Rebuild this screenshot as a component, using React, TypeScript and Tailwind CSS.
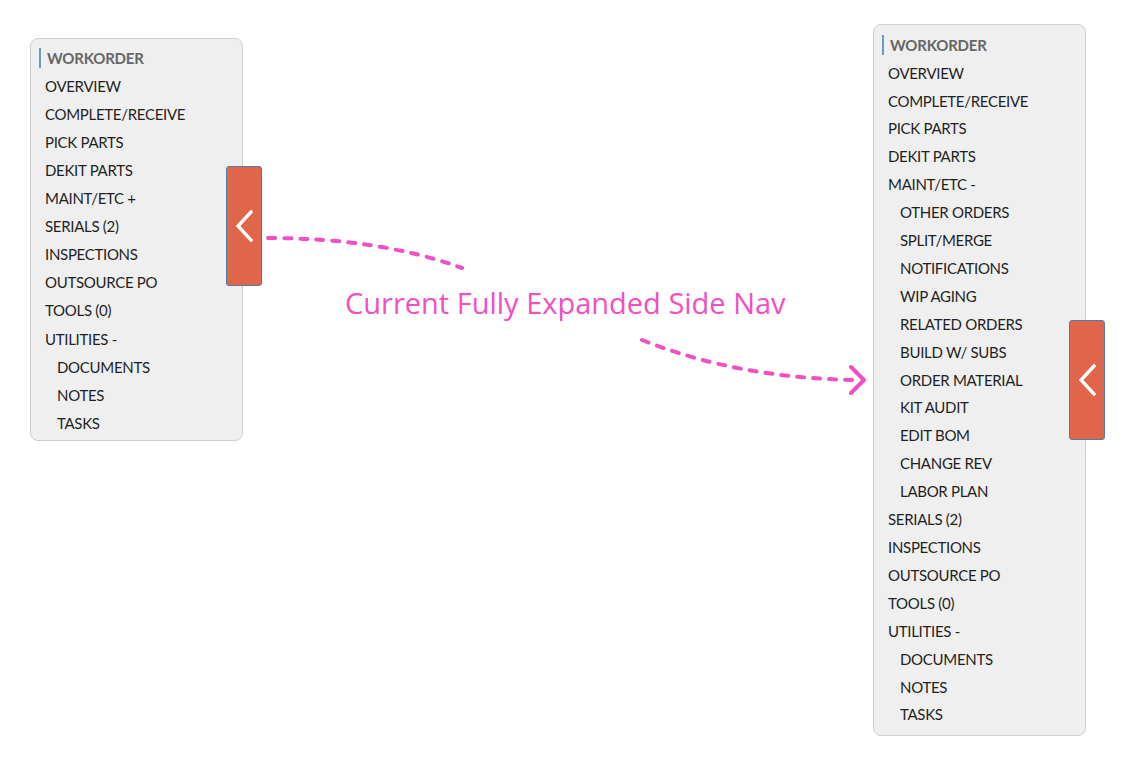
import React from 'react';

type NavItem = { label: string; sub?: boolean };

const collapsedItems: NavItem[] = [
  { label: 'OVERVIEW' },
  { label: 'COMPLETE/RECEIVE' },
  { label: 'PICK PARTS' },
  { label: 'DEKIT PARTS' },
  { label: 'MAINT/ETC +' },
  { label: 'SERIALS (2)' },
  { label: 'INSPECTIONS' },
  { label: 'OUTSOURCE PO' },
  { label: 'TOOLS (0)' },
  { label: 'UTILITIES -' },
  { label: 'DOCUMENTS', sub: true },
  { label: 'NOTES', sub: true },
  { label: 'TASKS', sub: true },
];

const expandedItems: NavItem[] = [
  { label: 'OVERVIEW' },
  { label: 'COMPLETE/RECEIVE' },
  { label: 'PICK PARTS' },
  { label: 'DEKIT PARTS' },
  { label: 'MAINT/ETC -' },
  { label: 'OTHER ORDERS', sub: true },
  { label: 'SPLIT/MERGE', sub: true },
  { label: 'NOTIFICATIONS', sub: true },
  { label: 'WIP AGING', sub: true },
  { label: 'RELATED ORDERS', sub: true },
  { label: 'BUILD W/ SUBS', sub: true },
  { label: 'ORDER MATERIAL', sub: true },
  { label: 'KIT AUDIT', sub: true },
  { label: 'EDIT BOM', sub: true },
  { label: 'CHANGE REV', sub: true },
  { label: 'LABOR PLAN', sub: true },
  { label: 'SERIALS (2)' },
  { label: 'INSPECTIONS' },
  { label: 'OUTSOURCE PO' },
  { label: 'TOOLS (0)' },
  { label: 'UTILITIES -' },
  { label: 'DOCUMENTS', sub: true },
  { label: 'NOTES', sub: true },
  { label: 'TASKS', sub: true },
];

function CollapseTab({ top }: { top: string }) {
  return (
    <button
      type="button"
      className={`absolute ${top} -right-[20px] w-[36px] h-[120px] bg-[#e0664b] border border-[#4f7ea0] rounded-[3px] flex items-center justify-center cursor-pointer`}
    >
      <svg width="18" height="32" viewBox="0 0 18 32" fill="none">
        <path d="M16 2 L3 16 L16 30" stroke="white" strokeWidth="3.4" strokeLinecap="square" />
      </svg>
    </button>
  );
}

function SideNav({
  items,
  tabTop,
  rowClass,
  className,
}: {
  items: NavItem[];
  tabTop: string;
  rowClass: string;
  className?: string;
}) {
  return (
    <div className={`relative w-[213px] bg-[#efefef] border border-[#cfcfcf] rounded-[8px] ${className ?? ''}`}>
      <div className={`${rowClass} flex items-center pl-[8px]`}>
        <span className="w-[2px] h-[20px] bg-[#6a9ab8] mr-[6px]" />
        <span className="text-[15px] font-bold text-[#666666] tracking-[-0.2px]">WORKORDER</span>
      </div>
      {items.map((item, i) => (
        <div
          key={i}
          className={`${rowClass} flex items-center text-[15px] tracking-[-0.3px] text-[#1f1f1f] ${item.sub ? 'pl-[26px]' : 'pl-[14px]'}`}
        >
          {item.label}
        </div>
      ))}
      <CollapseTab top={tabTop} />
    </div>
  );
}

export default function App() {
  return (
    <div
      className="relative w-[1135px] h-[760px] bg-white overflow-hidden flex items-start"
      style={{ fontFamily: 'Lato, "Open Sans", sans-serif' }}
    >
      <SideNav
        items={collapsedItems}
        tabTop="top-[127px]"
        rowClass="h-[28.08px]"
        className="mt-[38px] ml-[30px] pt-[5px] pb-[3px]"
      />
      <SideNav
        items={expandedItems}
        tabTop="top-[295px]"
        rowClass="h-[27.92px]"
        className="mt-[24px] ml-auto mr-[49px] pt-[6px] pb-[6px]"
      />

      <div
        className="absolute left-[345px] top-[284px] text-[29px] leading-[38px] text-[#f050c0] whitespace-nowrap"
        style={{ fontFamily: '"Open Sans", sans-serif' }}
      >
        Current Fully Expanded Side Nav
      </div>

      <svg className="absolute inset-0 pointer-events-none" width="1135" height="760" fill="none">
        <path
          d="M268 238 Q380 238 462 268"
          stroke="#f050c0"
          strokeWidth="4"
          strokeLinecap="round"
          strokeDasharray="7 9"
        />
        <path
          d="M642 340 Q740 379 860 380"
          stroke="#f050c0"
          strokeWidth="4"
          strokeLinecap="round"
          strokeDasharray="7 9"
        />
        <path d="M851 367 L864 380 L851 393" stroke="#f050c0" strokeWidth="4" strokeLinecap="round" strokeLinejoin="round" />
      </svg>
    </div>
  );
}
